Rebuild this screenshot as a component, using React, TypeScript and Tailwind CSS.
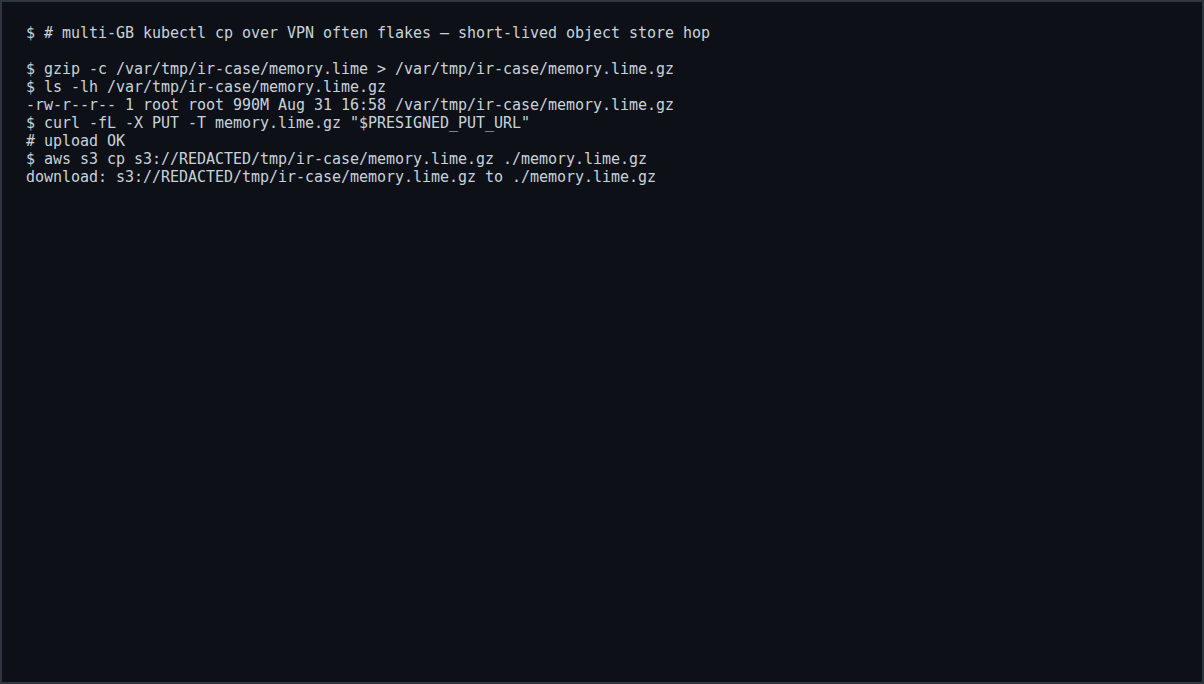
export default function App() {
  const lines = [
    "$ # multi-GB kubectl cp over VPN often flakes — short-lived object store hop",
    "",
    "$ gzip -c /var/tmp/ir-case/memory.lime > /var/tmp/ir-case/memory.lime.gz",
    "$ ls -lh /var/tmp/ir-case/memory.lime.gz",
    "-rw-r--r-- 1 root root 990M Aug 31 16:58 /var/tmp/ir-case/memory.lime.gz",
    '$ curl -fL -X PUT -T memory.lime.gz "$PRESIGNED_PUT_URL"',
    "# upload OK",
    "$ aws s3 cp s3://REDACTED/tmp/ir-case/memory.lime.gz ./memory.lime.gz",
    "download: s3://REDACTED/tmp/ir-case/memory.lime.gz to ./memory.lime.gz",
  ];
  return (
    <div className="w-[1204px] h-[684px] bg-[#0d1117] border-2 border-[#30363d] overflow-hidden">
      <pre className="m-0 px-6 pt-[22px] font-['DejaVu_Sans_Mono',monospace] text-[15px] tracking-[-0.03px] leading-[18px] text-[#c9d1d9] whitespace-pre">
        {lines.map((l, i) => (
          <div key={i} className="h-[18px]">{l}</div>
        ))}
      </pre>
    </div>
  );
}
